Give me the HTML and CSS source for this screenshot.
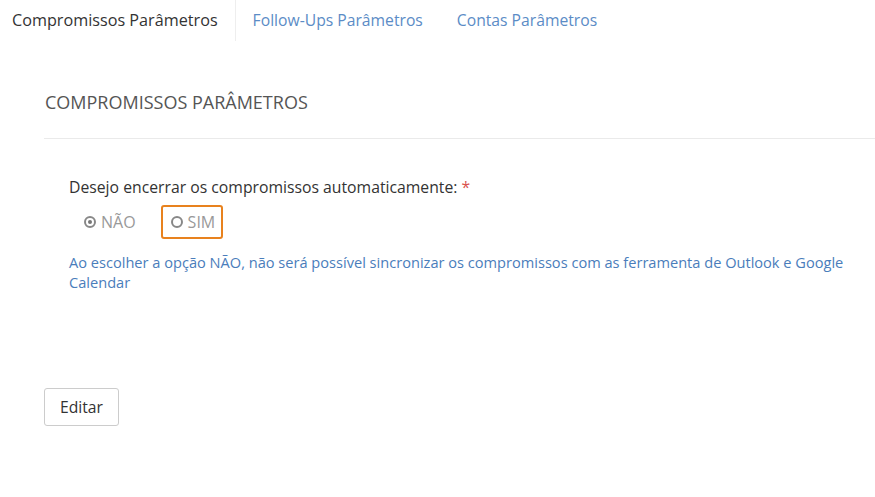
FILE: index.html
```html
<!DOCTYPE html>
<html lang="pt">
<head>
<meta charset="utf-8">
<link rel="stylesheet" href="styles.css">
</head>
<body>
<ul class="tabs">
  <li class="tab active">Compromissos Parâmetros</li>
  <li class="tab">Follow-Ups Parâmetros</li>
  <li class="tab">Contas Parâmetros</li>
</ul>
<div class="panel">
  <h3 class="title">COMPROMISSOS PARÂMETROS</h3>
  <div class="form">
    <div class="label">Desejo encerrar os compromissos automaticamente: <span class="req">*</span></div>
    <div class="radios">
      <span class="radio"><span class="dot checked"></span>NÃO</span>
      <span class="radio focus"><span class="dot"></span>SIM</span>
    </div>
    <p class="help">Ao escolher a opção NÃO, não será possível sincronizar os compromissos com as ferramenta de Outlook e Google Calendar</p>
  </div>
  <button class="btn">Editar</button>
</div>
</body>
</html>
```
FILE: styles.css
```css
html, body { margin: 0; padding: 0; background: #fff; }
body { font-family: "Open Sans", "Noto Sans", sans-serif; color: #333; width: 875px; height: 497px; overflow: hidden; }
.tabs { list-style: none; margin: 0; padding: 0; display: flex; height: 41px; }
.tab { font-size: 15.7px; line-height: 20px; padding: 10px 17px 11px 17px; color: #5b8cc6; }
.tab.active { color: #333; font-size: 16.2px; padding-left: 12px; padding-right: 17px; border-right: 1px solid #eeeeee; }
.panel { padding: 0 0 0 44px; }
.title { margin: 0; font-weight: 400; font-size: 18px; color: #555; padding: 49px 0 24px 1px; line-height: 24px; border-bottom: 1px solid #eaeaea; }
.form { padding: 37px 0 0 25px; width: 800px; }
.label { font-size: 15.75px; line-height: 22px; color: #333; }
.req { color: #d9534f; }
.radios { display: flex; align-items: center; margin-top: 7px; height: 34px; padding-left: 15px; }
.radio { display: inline-flex; align-items: center; font-size: 16px; color: #999; line-height: 20px; }
.radio.focus { margin-left: 25px; border: 2px solid #e8821e; border-radius: 3px; padding: 5px 6px 5px 8px; height: 20px; }
.dot { width: 8px; height: 8px; border: 2px solid #888; border-radius: 50%; margin-right: 5px; position: relative; box-sizing: content-box; }
.dot.checked::after { content: ""; position: absolute; left: 2px; top: 2px; width: 4px; height: 4px; border-radius: 50%; background: #777; }
.help { margin: 13px 0 0 0; font-size: 14.6px; line-height: 20px; color: #4a7dbb; }
.btn { margin-top: 96px; font-family: "Open Sans", "Noto Sans", sans-serif; font-size: 15.7px; color: #333; background: #fff; border: 1px solid #ccc; border-radius: 3px; padding: 8px 15px 8px; line-height: 20px; }
```
